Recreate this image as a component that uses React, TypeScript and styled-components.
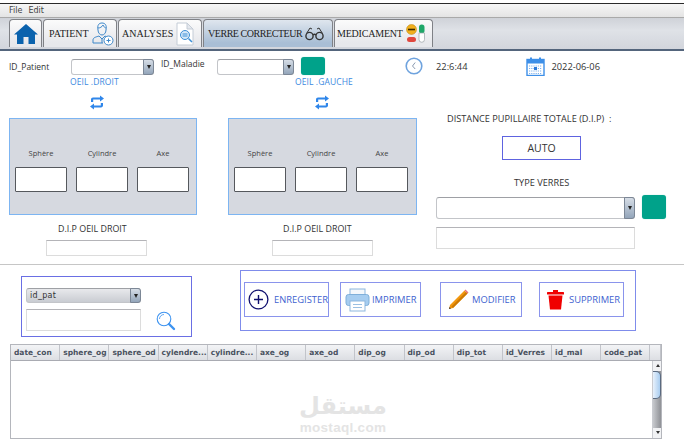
import React from 'react';
import styled, { createGlobalStyle } from 'styled-components';

const GlobalStyle = createGlobalStyle`
  html, body { margin: 0; padding: 0; background: #fff; }
  * { box-sizing: border-box; }
`;

const Page = styled.div`
  position: relative;
  width: 687px;
  height: 442px;
  overflow: hidden;
  background: #fff;
  font-family: "Open Sans", "Noto Sans", sans-serif;
  color: #333;
`;

const TopRule = styled.div`
  width: 684px;
  height: 4px;
  border-bottom: 1px solid #2a2a2a;
`;

const MenuBar = styled.div`
  display: flex;
  gap: 6px;
  align-items: center;
  width: 684px;
  height: 13px;
  padding-left: 9px;
  font: 8px "DejaVu Sans", sans-serif;
  color: #444;
  background: linear-gradient(#f6f6f6, #e4e4e4);
`;

const TabBar = styled.div`
  display: flex;
  align-items: flex-end;
  gap: 1px;
  width: 684px;
  height: 34px;
  padding-left: 9px;
  padding-bottom: 2px;
  background: linear-gradient(#cfd2d8, #dfe2e7 40%, #d2d5dc);
  border-top: 1px solid #a9a9a9;
  border-bottom: 2px solid #54657c;
`;

const Tab = styled.div<{ $w: number; $pl?: number; $ls?: number; $active?: boolean }>`
  display: flex;
  align-items: center;
  justify-content: ${p => (p.$pl === undefined ? 'center' : 'flex-start')};
  gap: 3px;
  width: ${p => p.$w}px;
  height: 28px;
  padding-left: ${p => p.$pl ?? 0}px;
  border: 1px solid #7f8186;
  border-bottom: none;
  border-radius: 4px 4px 0 0;
  font: 10px "Liberation Serif", serif;
  letter-spacing: ${p => p.$ls ?? 0}px;
  white-space: nowrap;
  color: #222;
  background: ${p =>
    p.$active
      ? 'linear-gradient(#dfe6ee, #a9bed5 85%)'
      : 'linear-gradient(#fbfbfb, #e7e8ec 85%)'};
  & > svg {
    flex-shrink: 0;
  }
`;

const FormArea = styled.div`
  width: 684px;
  height: 214px;
  padding: 8px 0 0 9px;
  border-bottom: 1px solid #c6c6c6;
`;

const TopRow = styled.div`
  display: flex;
  align-items: flex-start;
  height: 17px;
`;

const FieldLabel = styled.span<{ $w: number; $y: number; $pl?: number }>`
  width: ${p => p.$w}px;
  margin-top: ${p => p.$y}px;
  padding-left: ${p => p.$pl ?? 0}px;
  font-size: 8.5px;
  line-height: 12px;
  color: #333;
`;

const Select = styled.div<{ $w: number; $h?: number; $bare?: boolean }>`
  position: relative;
  display: flex;
  align-items: center;
  flex-shrink: 0;
  width: ${p => p.$w}px;
  height: ${p => p.$h ?? 16}px;
  padding-left: 3px;
  border: 1px solid #c3c5c9;
  border-top-color: #9ea0a5;
  border-radius: 3px;
  font: 8px "DejaVu Sans", sans-serif;
  letter-spacing: 0.3px;
  color: #333;
  background: ${p => (p.$bare ? 'linear-gradient(#e8e9ec, #c9ccd2)' : '#fff')};
`;

const SelectArrow = styled.span`
  position: absolute;
  top: -1px;
  right: -1px;
  bottom: -1px;
  width: 11px;
  border: 1px solid #7c8796;
  border-radius: 0 3px 3px 0;
  background: linear-gradient(#d6dde6, #93a5ba);
  &::after {
    content: '';
    position: absolute;
    top: 50%;
    left: 2.5px;
    margin-top: -2px;
    border: 2.5px solid transparent;
    border-top: 4px solid #222;
    border-bottom: none;
  }
`;

const Swatch = styled.div`
  width: 24px;
  height: 24px;
  border-radius: 3px;
  background: #00a28a;
  box-shadow: 0 0 1px #7fd0c4;
`;

const SmallSwatch = styled(Swatch)`
  height: 18px;
  margin: -2px 0 0 7px;
`;

const Clock = styled.div<{ $gap: number; $left: number }>`
  display: flex;
  align-items: center;
  gap: ${p => p.$gap}px;
  margin: -2px 0 0 ${p => p.$left}px;
  font-size: 9.3px;
  color: #333;
`;

const Columns = styled.div`
  display: grid;
  grid-template-columns: 188px 189px 231px;
  column-gap: 31px;
`;

const EyeColumn = styled.div`
  display: flex;
  flex-direction: column;
  height: 180px;
`;

const EyeLabel = styled.div<{ $x: number }>`
  margin-left: ${p => p.$x}px;
  font-size: 8.5px;
  line-height: 12px;
  letter-spacing: 0.1px;
  color: #3d8ae0;
`;

const SwapWrap = styled.div<{ $x: number }>`
  height: 23px;
  margin: 7px 0 0 ${p => p.$x}px;
  & > svg {
    display: block;
  }
`;

const EyePanel = styled.div`
  display: flex;
  gap: 9px;
  height: 97px;
  padding: 28px 0 0 5px;
  background: #d6d9e0;
  border: 1px solid #7db5f2;
`;

const MeasureField = styled.div`
  display: flex;
  flex-direction: column;
  align-items: center;
  gap: 8px;
  width: 52px;
  font-size: 7.5px;
  line-height: 12px;
  color: #444;
`;

const MeasureInput = styled.div`
  width: 52px;
  height: 25px;
  background: #fff;
  border: 1px solid #55585d;
  border-radius: 1px;
`;

const DipLabel = styled.div<{ $x: number }>`
  margin: 8px 0 0 ${p => p.$x}px;
  font-size: 8.9px;
  line-height: 12px;
  color: #333;
`;

const PlainInput = styled.div<{ $w: number; $h: number; $x?: number }>`
  width: ${p => p.$w}px;
  height: ${p => p.$h}px;
  margin-left: ${p => p.$x ?? 0}px;
  flex-shrink: 0;
  background: #fff;
  border: 1px solid #dcdcdc;
  border-top-color: #b4b4b8;
`;

const DipInput = styled(PlainInput)`
  margin-top: 5px;
`;

const RightColumn = styled.div`
  display: flex;
  flex-direction: column;
  margin-left: -12px;
`;

const DistanceLabel = styled.div`
  margin: 37px 0 0 11px;
  font-size: 9.2px;
  line-height: 12px;
  white-space: pre;
  color: #333;
`;

const AutoBox = styled.div`
  display: flex;
  align-items: center;
  justify-content: center;
  width: 79px;
  height: 24px;
  margin: 11px 0 0 66px;
  border: 1px solid #5e63e0;
  font-size: 10.5px;
  color: #333;
`;

const TypeLabel = styled.div`
  margin: 17px 0 0 78px;
  font-size: 9.2px;
  line-height: 12px;
  color: #333;
`;

const TypeRow = styled.div`
  display: flex;
  align-items: flex-end;
  gap: 7px;
  margin-top: 6px;
`;

const TypeInput = styled(PlainInput)`
  margin-top: 8px;
`;

const LowerRow = styled.div`
  display: flex;
  align-items: flex-start;
  height: 79px;
  width: 684px;
`;

const SearchBox = styled.div`
  display: flex;
  width: 171px;
  height: 61px;
  margin: 11px 0 0 21px;
  padding: 11px 0 0 4px;
  border: 1px solid #6a6fe4;
`;

const SearchStack = styled.div`
  display: flex;
  flex-direction: column;
  gap: 6px;
`;

const SearchIconCell = styled.div`
  padding: 23px 0 0 15px;
`;

const ActionBox = styled.div`
  display: flex;
  width: 396px;
  height: 61px;
  margin: 5px 0 0 48px;
  padding: 11px 0 0 3px;
  border: 1px solid #7f8ceb;
`;

const ActionButton = styled.div<{ $w: number; $ml: number; $gap: number; $pl: number }>`
  display: flex;
  align-items: center;
  gap: ${p => p.$gap}px;
  width: ${p => p.$w}px;
  height: 35px;
  margin-left: ${p => p.$ml}px;
  padding-left: ${p => p.$pl}px;
  border: 1px solid #8a94ec;
  font-size: 9.4px;
  color: #3e5fcf;
  white-space: nowrap;
`;

const TableWrap = styled.div`
  position: relative;
  width: 652px;
  height: 95px;
  margin-left: 10px;
  border: 1px solid #b4b6bc;
`;

const HeadRow = styled.div`
  display: grid;
  grid-template-columns: repeat(13, 49.2px) 1fr;
  height: 16px;
  border-bottom: 1px solid #a9abb2;
  background: linear-gradient(#f3f4f6, #dcdee3);
`;

const HeadCell = styled.div`
  padding-left: 3px;
  border-right: 1px solid #c2c4ca;
  font: bold 7.5px/15px "DejaVu Sans", sans-serif;
  color: #4a5260;
  white-space: nowrap;
  overflow: hidden;
`;

const ScrollTrack = styled.div`
  position: absolute;
  top: 16px;
  right: 0;
  bottom: 0;
  width: 9px;
  border-left: 1px solid #c9cbd0;
  background: linear-gradient(90deg, #c7c9cd, #8f9196);
`;

const ScrollEnd = styled.div<{ $top?: boolean }>`
  position: absolute;
  left: 0;
  right: 0;
  height: 10px;
  ${p => (p.$top ? 'top: 0;' : 'bottom: 0;')}
  background: #f1f2f4;
  &::after {
    content: '';
    position: absolute;
    left: 2.5px;
    top: 3px;
    border: 2px solid transparent;
    ${p => (p.$top ? 'border-bottom: 3px solid #333; border-top: none;' : 'border-top: 3px solid #333; border-bottom: none;')}
  }
`;

const ScrollThumb = styled.div`
  position: absolute;
  top: 10px;
  left: 0;
  right: 0;
  height: 28px;
  border: 1px solid #5a6a80;
  border-left: none;
  border-radius: 0 5px 5px 0;
  background: linear-gradient(90deg, #e8f1fb, #a9cdf0);
`;

const Watermark = styled.div`
  position: absolute;
  left: 288px;
  top: 48px;
  width: 88px;
  text-align: center;
  color: #e4e4e4;
`;

const WatermarkAr = styled.div`
  height: 27px;
  font: bold 24px/27px "DejaVu Sans", sans-serif;
`;

const WatermarkEn = styled.div`
  font: bold 13.5px/15px "Liberation Sans", sans-serif;
  letter-spacing: 0.3px;
`;

const HomeIcon = () => (
  <svg width="24" height="20" viewBox="0 0 24 20">
    <path fill="#0a62ad" d="M12 0 L24 10.5 L21 10.5 L21 20 L14.5 20 L14.5 13 L9.5 13 L9.5 20 L3 20 L3 10.5 L0 10.5 Z" />
  </svg>
);

const DoctorIcon = () => (
  <svg width="22" height="24" viewBox="0 0 22 24" fill="none" stroke="#3d87c9" strokeWidth="1">
    <path d="M6 8 C5 3 7 1 10 1 C13 1 15 3 14 8 C14 11 12 13 10 13 C8 13 6 11 6 8 Z" />
    <path d="M6 6 C8 6 10 5 11 3 C12 5 13 6 14 6" />
    <path d="M1 21 L1 18 C1 15.5 4 15 7 14 L10 17 L13 14 L15 15" />
    <path d="M1 21 L11 21" />
    <path d="M10 17 L10 21" />
    <circle cx="16.5" cy="18.5" r="4.5" fill="#fff" />
    <path d="M14.5 18.5 H18.5 M16.5 16.5 V20.5" />
  </svg>
);

const ReportIcon = () => (
  <svg width="19" height="24" viewBox="0 0 19 24">
    <path fill="#fff" stroke="#c4ccd6" d="M1 1 H11 L17 7 V23 H1 Z" />
    <path fill="#e4e8ee" stroke="#c4ccd6" d="M11 1 V7 H17 Z" />
    <circle cx="9" cy="13" r="4.5" fill="#d5e8f8" stroke="#3d8fd6" />
    <path stroke="#3d8fd6" d="M6.5 12 H11.5 M6.5 14 H11.5" />
    <path stroke="#3d8fd6" strokeWidth="1.5" d="M12.5 16.5 L16 20" />
  </svg>
);

const GlassesIcon = () => (
  <svg width="19" height="14" viewBox="0 0 19 14" fill="none" stroke="#333" strokeWidth="1.4">
    <circle cx="4.5" cy="9" r="3.6" />
    <circle cx="14.5" cy="9" r="3.6" />
    <path d="M8 8 C9 7 10 7 11 8" />
    <path d="M1.5 6.5 L5 1 L7 2 M17.5 6.5 L14 1 L12 2" strokeWidth="1" />
  </svg>
);

const PillsIcon = () => (
  <svg width="19" height="19" viewBox="0 0 19 19">
    <circle cx="5.5" cy="5.5" r="5" fill="#f2b01e" stroke="#b58210" strokeWidth="0.5" />
    <rect x="2" y="4.7" width="7" height="1.6" fill="#3a2a00" />
    <rect x="1" y="13" width="9" height="5" rx="2.5" fill="#e0483f" />
    <rect x="13" y="0.5" width="5.5" height="9" rx="2.7" fill="#1fa869" />
    <path fill="#fff" stroke="#9aa0a6" strokeWidth="0.7" d="M13 9 H18.5 V15.5 A2.75 2.75 0 0 1 13 15.5 Z" />
  </svg>
);

const SwapIcon = () => (
  <svg width="14" height="15" viewBox="0 0 14 15" fill="#2f86ea">
    <path d="M1 7 V4.5 C1 3.4 1.8 2.6 3 2.6 H10 V0.5 L14 3.6 L10 6.6 V4.6 H3.2 V7 Z" />
    <path d="M13 8 V10.5 C13 11.6 12.2 12.4 11 12.4 H4 V14.5 L0 11.4 L4 8.4 V10.4 H10.8 V8 Z" />
  </svg>
);

const ClockIcon = () => (
  <svg width="18" height="18" viewBox="0 0 18 18" fill="none" stroke="#6fa3de">
    <circle cx="9" cy="9" r="7.8" strokeWidth="1.6" />
    <path d="M10.2 5.5 L7.5 9 L10.2 12" strokeWidth="1" stroke="#8a9ab0" />
  </svg>
);

const CalendarIcon = () => (
  <svg width="19" height="19" viewBox="0 0 19 19">
    <rect x="1" y="2.5" width="17" height="16" fill="#fff" stroke="#3d8fe8" strokeWidth="1.4" />
    <rect x="1" y="2.5" width="17" height="4" fill="#3d8fe8" />
    <rect x="4" y="0.5" width="2" height="4" fill="#3d8fe8" />
    <rect x="13" y="0.5" width="2" height="4" fill="#3d8fe8" />
    <path stroke="#7db2ee" strokeWidth="1" strokeDasharray="1.2 1" d="M3 9 H16 M3 11.5 H16 M3 14 H16 M3 16.5 H16" />
    <rect x="8" y="10" width="3" height="3" fill="#2f7bd8" />
  </svg>
);

const SearchIcon = () => (
  <svg width="20" height="20" viewBox="0 0 20 20" fill="none" stroke="#3d93f0">
    <circle cx="8" cy="8" r="6.8" strokeWidth="1.1" />
    <path d="M3.5 8 C3.5 5.5 5.5 3.5 8 3.5" strokeWidth="0.8" />
    <path d="M13 13 L18 18" strokeWidth="2.4" strokeLinecap="round" />
  </svg>
);

const PlusCircleIcon = () => (
  <svg width="21" height="21" viewBox="0 0 21 21" fill="none" stroke="#10106e">
    <circle cx="10.5" cy="10.5" r="9.4" strokeWidth="1.3" />
    <path d="M10.5 6 V15 M6 10.5 H15" strokeWidth="1.4" />
  </svg>
);

const PrinterIcon = () => (
  <svg width="25" height="24" viewBox="0 0 25 24">
    <rect x="5" y="1" width="15" height="7" fill="#f3f7fb" stroke="#8db7de" />
    <rect x="1" y="6.5" width="23" height="11" rx="2.5" fill="#a6cdf0" stroke="#7fafd9" />
    <rect x="5" y="13" width="15" height="10" fill="#fff" stroke="#8db7de" />
    <path stroke="#9cc0e2" d="M8 16.5 H17 M8 19.5 H17" />
  </svg>
);

const PencilIcon = () => (
  <svg width="21" height="21" viewBox="0 0 21 21">
    <path fill="#f2970f" d="M16.5 1.5 L19.5 4.5 L5 19 L1 20 L2 16 Z" />
    <path fill="#cc7a05" d="M18 3 L19.5 4.5 L5 19 L3.5 17.5 Z" />
    <path fill="#e8707a" d="M16.5 1.5 L17.5 0.5 L20.5 3.5 L19.5 4.5 Z" />
    <path fill="#333" d="M1 20 L1.5 18 L3 19.5 Z" />
  </svg>
);

const TrashIcon = () => (
  <svg width="17" height="20" viewBox="0 0 17 20" fill="#f00000">
    <rect x="6" y="0" width="5" height="2" />
    <rect x="0" y="2" width="17" height="2.4" rx="0.5" />
    <path d="M1.5 5.5 H15.5 L14 19.5 H3 Z" />
  </svg>
);

const headers = [
  'date_con', 'sphere_og', 'sphere_od', 'cylendre...', 'cylindre...', 'axe_og', 'axe_od',
  'dip_og', 'dip_od', 'dip_tot', 'id_Verres', 'id_mal', 'code_pat',
];

const EyeMeasures = () => (
  <EyePanel>
    {['Sphère', 'Cylindre', 'Axe'].map(name => (
      <MeasureField key={name}>
        {name}
        <MeasureInput />
      </MeasureField>
    ))}
  </EyePanel>
);

export default function App() {
  return (
    <Page>
      <GlobalStyle />
      <TopRule />
      <MenuBar>
        <span>File</span>
        <span>Edit</span>
      </MenuBar>
      <TabBar>
        <Tab $w={33}><HomeIcon /></Tab>
        <Tab $w={74} $pl={5}>PATIENT <DoctorIcon /></Tab>
        <Tab $w={84} $pl={3}>ANALYSES <ReportIcon /></Tab>
        <Tab $w={130} $pl={4} $ls={-0.45} $active>VERRE CORRECTEUR <GlassesIcon /></Tab>
        <Tab $w={99} $pl={2} $ls={-0.2}>MEDICAMENT <PillsIcon /></Tab>
      </TabBar>

      <FormArea>
        <TopRow>
          <FieldLabel $w={62} $y={2}>ID_Patient</FieldLabel>
          <Select $w={83}><SelectArrow /></Select>
          <FieldLabel $w={63} $y={-1} $pl={7}>ID_Maladie</FieldLabel>
          <Select $w={77}><SelectArrow /></Select>
          <SmallSwatch />
          <Clock $gap={13} $left={80}><ClockIcon />22:6:44</Clock>
          <Clock $gap={6} $left={59}><CalendarIcon />2022-06-06</Clock>
        </TopRow>
        <Columns>
          <EyeColumn>
            <EyeLabel $x={61}>OEIL .DROIT</EyeLabel>
            <SwapWrap $x={81}><SwapIcon /></SwapWrap>
            <EyeMeasures />
            <DipLabel $x={49}>D.I.P OEIL DROIT</DipLabel>
            <DipInput $w={101} $h={16} $x={37} />
          </EyeColumn>
          <EyeColumn>
            <EyeLabel $x={67}>OEIL .GAUCHE</EyeLabel>
            <SwapWrap $x={87}><SwapIcon /></SwapWrap>
            <EyeMeasures />
            <DipLabel $x={55}>D.I.P OEIL DROIT</DipLabel>
            <DipInput $w={101} $h={16} $x={44} />
          </EyeColumn>
          <RightColumn>
            <DistanceLabel>DISTANCE PUPILLAIRE TOTALE (D.I.P)  :</DistanceLabel>
            <AutoBox>AUTO</AutoBox>
            <TypeLabel>TYPE VERRES</TypeLabel>
            <TypeRow>
              <Select $w={199} $h={22}><SelectArrow /></Select>
              <Swatch />
            </TypeRow>
            <TypeInput $w={199} $h={22} />
          </RightColumn>
        </Columns>
      </FormArea>

      <LowerRow>
        <SearchBox>
          <SearchStack>
            <Select $w={115} $h={15} $bare>id_pat<SelectArrow /></Select>
            <PlainInput $w={115} $h={22} />
          </SearchStack>
          <SearchIconCell><SearchIcon /></SearchIconCell>
        </SearchBox>
        <ActionBox>
          <ActionButton $w={85} $ml={0} $gap={5} $pl={3}><PlusCircleIcon />ENREGISTER</ActionButton>
          <ActionButton $w={81} $ml={11} $gap={2} $pl={4}><PrinterIcon />IMPRIMER</ActionButton>
          <ActionButton $w={82} $ml={19} $gap={3} $pl={7}><PencilIcon />MODIFIER</ActionButton>
          <ActionButton $w={85} $ml={17} $gap={5} $pl={7}><TrashIcon />SUPPRIMER</ActionButton>
        </ActionBox>
      </LowerRow>

      <TableWrap>
        <HeadRow>
          {headers.map(h => <HeadCell key={h}>{h}</HeadCell>)}
          <HeadCell />
        </HeadRow>
        <ScrollTrack>
          <ScrollEnd $top />
          <ScrollThumb />
          <ScrollEnd />
        </ScrollTrack>
        <Watermark>
          <WatermarkAr>مستقل</WatermarkAr>
          <WatermarkEn>mostaql.com</WatermarkEn>
        </Watermark>
      </TableWrap>
    </Page>
  );
}
